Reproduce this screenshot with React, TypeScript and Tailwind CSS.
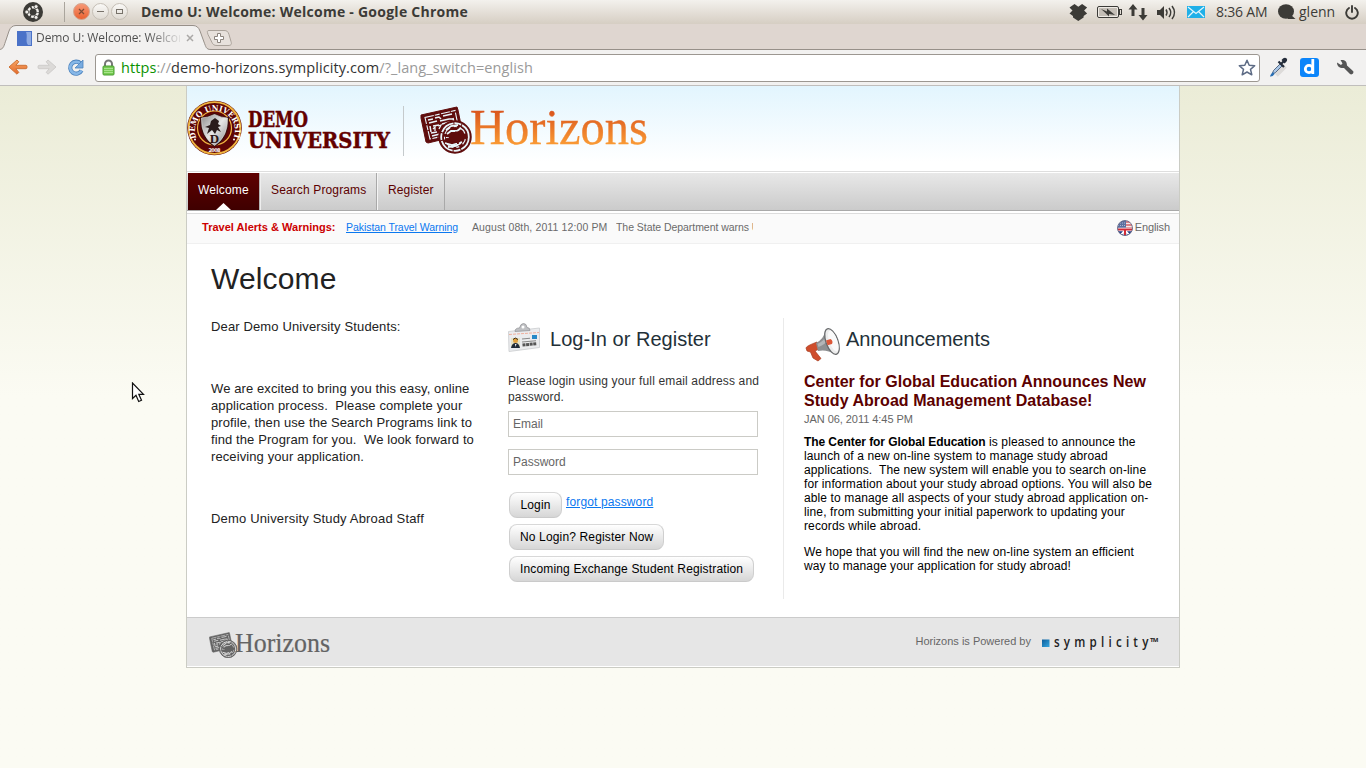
import React from "react";

const UI = "font-['Open_Sans','Noto_Sans',sans-serif]";

function UbuntuLogo() {
  return (
    <svg width="20" height="20" viewBox="0 0 20 20">
      <circle cx="10" cy="10" r="10" fill="#3c3b37" />
      <circle cx="10" cy="10" r="4.8" fill="none" stroke="#f0eeea" strokeWidth="2.4" strokeDasharray="8.6 1.450" strokeDashoffset="-0.7" />
      <g fill="#f0eeea" stroke="#3c3b37" strokeWidth="0.8">
        <circle cx="3.8" cy="10" r="2" />
        <circle cx="13.1" cy="4.6" r="2" />
        <circle cx="13.1" cy="15.4" r="2" />
      </g>
    </svg>
  );
}

function WindowButtons() {
  return (
    <svg width="56" height="18" viewBox="0 0 56 18">
      <defs>
        <linearGradient id="wb" x1="0" y1="0" x2="0" y2="1">
          <stop offset="0" stopColor="#fbfaf8" />
          <stop offset="1" stopColor="#dfdad2" />
        </linearGradient>
        <linearGradient id="wc" x1="0" y1="0" x2="0" y2="1">
          <stop offset="0" stopColor="#f79a78" />
          <stop offset="1" stopColor="#e9602f" />
        </linearGradient>
      </defs>
      <circle cx="9.500" cy="8.500" r="8" fill="url(#wc)" stroke="#d3a48f" />
      <path d="M7 6l5 5M12 6l-5 5" stroke="#7d4a34" strokeWidth="1.200" />
      <circle cx="28.500" cy="8.500" r="8" fill="url(#wb)" stroke="#c4beb5" />
      <path d="M25 8.500h7" stroke="#77726a" />
      <circle cx="47.500" cy="8.500" r="8" fill="url(#wb)" stroke="#c4beb5" />
      <rect x="44.500" y="6.500" width="6" height="4" fill="none" stroke="#77726a" />
    </svg>
  );
}

function TrayIcons() {
  return (
    <svg width="140" height="20" viewBox="1068 2 140 20" fill="#3c3b37">
      <path d="M1069.500 7.500l5-3.500 3.800 2.800 3.800-2.800 5 3.500-3 3 3 3-3.500 2.500v1.500l-5.300 3.500-5.300-3.500v-1.500l-3.500-2.500 3-3z" />
      <rect x="1097.500" y="6.500" width="21" height="11" rx="1.500" fill="#efebe5" stroke="#3c3b37" />
      <rect x="1099" y="8" width="18" height="8" fill="#c4beb6" />
      <rect x="1119.500" y="9.500" width="2" height="5" fill="none" stroke="#3c3b37" />
      <path d="M1101 9l6 2.500 0-3 8 6.500-6-1 0 2.500-4-4z" />
      <path d="M1133 4l-4.500 5.500h3v6.500h3v-6.500h3zM1143 20.500l-4.500-5.500h3v-7h3v7h3z" />
      <path d="M1157 10h3l4-4v13l-4-4h-3z" />
      <path d="M1166 9.500q2 3 0 6M1169 8q3.500 4.500 0 9M1172 6q5 6.500 0 13" fill="none" stroke="#3c3b37" strokeWidth="1.500" />
      <rect x="1187" y="6" width="18" height="12" fill="#20b0e8" />
      <path d="M1188 7l8 6.500 8-6.500M1188 17l5.500-5.500M1204 17l-5.500-5.500" fill="none" stroke="#e4f6fc" strokeWidth="1.200" />
    </svg>
  );
}

function TitleBar() {
  return (
    <div className="flex h-6 items-center bg-linear-to-b from-[#f3f1ed] to-[#d6cec3] text-[#3c3b37]">
      <div className="ml-[23px]"><UbuntuLogo /></div>
      <div className="ml-[21px] h-5 w-px bg-[#aaa59d]" />
      <div className="ml-[7px] flex w-[69px]"><WindowButtons /></div>
      <div className="w-[330px] text-[14px] leading-6 font-bold tracking-[0.250px] whitespace-nowrap">Demo U: Welcome: Welcome - Google Chrome</div>
      <div className="ml-auto"><TrayIcons /></div>
      <div className="ml-2 w-[54px] text-[14px] leading-6 tracking-[-0.200px] whitespace-nowrap">8:36 AM</div>
      <svg className="ml-2" width="18" height="16" viewBox="0 0 18 16" fill="#3c3b37">
        <ellipse cx="8" cy="7.500" rx="8" ry="7.300" />
        <path d="M12 10l5.500 5h-8z" />
      </svg>
      <div className="ml-[3px] w-[38px] text-[14px] leading-6 tracking-[0px] whitespace-nowrap">glenn</div>
      <svg className="mr-[7px] ml-2" width="14" height="15" viewBox="0 0 14 15" fill="none" stroke="#3c3b37" strokeWidth="1.900" strokeLinecap="round">
        <path d="M4 3a5.800 5.800 0 1 0 6 0M7 1v6" />
      </svg>
    </div>
  );
}

function TabStrip() {
  return (
    <div className="relative h-[26px] border-b border-[#979089] bg-[#dfd6d0]">
      <svg className="absolute top-0 left-0" width="240" height="27" viewBox="0 24 240 27">
        <path d="M-1 50.500V49.500C4 49.500 4 45 6 40L9 31q2-5.500 7-5.500H193q5 0 7 5.500l4 11c2 5 2 7.500 7 7.500v1z" fill="#f2f1f0" />
        <path d="M-1 49.500C4 49.500 4 45 6 40L9 31q2-5.500 7-5.500H193q5 0 7 5.500l4 11c2 5 2 7.500 7 7.500" fill="none" stroke="#979089" />
        <path d="M209 30.500h15c3 0 4 1 5 4l2 7c1 3 0 4-3 4h-11c-3 0-4-1-5-3l-4-8c-1-3-1-4 1-4z" fill="#e7e1dc" stroke="#aaa29a" />
        <path d="M217.500 33.500h3v3h3v3h-3v3h-3v-3h-3v-3h3z" fill="#fff" stroke="#8c857e" />
        <rect x="17" y="31" width="15" height="15" fill="#4a72c8" />
        <path d="M26 32h5v13h-3c-3-4 0-8-2-13z" fill="#8fabe2" />
        <path d="M187 35l6 6M193 35l-6 6" stroke="#aaa8a6" strokeWidth="1.500" />
      </svg>
      <div className="absolute top-[5px] left-9 w-[144px] overflow-hidden bg-linear-to-r from-[#4c4c4c] from-[78%] to-[#4c4c4c]/10 bg-clip-text text-[12px] leading-[18px] tracking-[-0.080px] whitespace-nowrap text-transparent">
        Demo U: Welcome: Welcome
      </div>
    </div>
  );
}

function Toolbar() {
  return (
    <div className="flex h-9 items-center border-b border-[#c0bebc] bg-[#f2f1f0]">
      <svg width="95" height="35" viewBox="0 50 95 35">
        <defs>
          <linearGradient id="back" x1="0" y1="0" x2="0" y2="1">
            <stop offset="0" stopColor="#f7a765" />
            <stop offset="1" stopColor="#e5682a" />
          </linearGradient>
        </defs>
        <path d="M9 67l8-7 1.800 1.800-3 3.500H26q1 0 1 1.700T26 68.700H15.800l3 3.700-1.800 1.800z" fill="url(#back)" stroke="#cf7337" strokeLinejoin="round" />
        <path d="M56 67l-8-7-1.800 1.800 3 3.500H39q-1 0-1 1.700t1 1.700h10.200l-3 3.700 1.800 1.800z" fill="#dcdad8" stroke="#cfcdcb" strokeLinejoin="round" />
        <path d="M80.500 63.500a6 6 0 1 0 1 7" fill="none" stroke="#4d83bd" strokeWidth="4.200" />
        <path d="M80.500 63.500a6 6 0 1 0 1 7" fill="none" stroke="#86b7e8" strokeWidth="2.600" />
        <path d="M83 60v8h-8l2.500-2.500z" fill="#78abe0" stroke="#4d83bd" strokeWidth=".8" />
      </svg>
      <div className="flex h-7 w-[1165px] items-center rounded-[3px] border border-[#9c9791] bg-white">
        <svg className="ml-1.5" width="13" height="17" viewBox="0 0 13 17">
          <path d="M3 8V5a3.500 3.500 0 0 1 7 0v3" fill="none" stroke="#777" strokeWidth="2" />
          <rect x="1" y="7" width="11" height="9" rx="1" fill="#76cb52" stroke="#4a9e32" />
          <path d="M2 9.500h9M2 11.500h9M2 13.500h9" stroke="#a7e38b" />
        </svg>
        <div className="ml-[6px] text-[14.500px] leading-6 tracking-[0.080px] whitespace-nowrap text-[#9a9a9a]">
          <span className="text-[#0a9200]">https</span>://<span className="text-[#333]">demo-horizons.symplicity.com</span>/?_lang_switch=english
        </div>
        <svg className="mr-[3px] ml-auto" width="18" height="18" viewBox="0 0 18 18">
          <path d="M9 1.300l2.200 5 5.500.5-4.200 3.600 1.300 5.400L9 13l-4.800 2.800 1.300-5.400L1.300 6.800l5.500-.5z" fill="#fff" stroke="#5d6b85" strokeWidth="1.500" strokeLinejoin="round" />
        </svg>
      </div>
      <svg width="106" height="35" viewBox="1260 50 106 35">
        <path d="M1276 75l9-9" stroke="#c9c7c4" strokeWidth="5" opacity=".5" />
        <path d="M1272 74.500l1.500-4 6.500-6.500 2 2-6.500 6.500z" fill="#a9c6e6" stroke="#485c78" strokeWidth=".9" />
        <path d="M1270 76.500q0-2 3-4.500l1.500 2q-2 3-4.500 2.500z" fill="#2a6fb4" />
        <path d="M1278.500 61.500l5.500 5.500M1281 64l4-4" stroke="#252d3a" strokeWidth="2.200" />
        <path d="M1281.500 60q3-3.500 5-1.500t-2 5z" fill="#252d3a" />
        <rect x="1300" y="58" width="19" height="19" rx="3" fill="#0b85fa" />
        <circle cx="1309" cy="69" r="3.700" fill="none" stroke="#fff" strokeWidth="2.800" />
        <path d="M1312.800 59V74" stroke="#fff" strokeWidth="2.800" />
        <path d="M1337 62.500l4 2.500 1.500-1.500-2-3.500c4-.5 6.500 1 6.500 5.500l6 5.500c1.500 1.500-1 4.500-3 3l-6-6c-4 .5-7-1.500-7-5.500z" fill="#555" />
      </svg>
    </div>
  );
}

function Seal() {
  return (
    <svg width="56" height="56" viewBox="0 0 56 56">
      <defs>
        <path id="sealArc" d="M9.800 39A20 20 0 1 1 46.200 39" />
        <linearGradient id="shield" x1="0" y1="0" x2="1" y2="1">
          <stop offset="0" stopColor="#8d8d8d" />
          <stop offset=".5" stopColor="#e6e6e6" />
          <stop offset="1" stopColor="#888" />
        </linearGradient>
      </defs>
      <circle cx="27.500" cy="28" r="27.300" fill="#5f0505" />
      <circle cx="27.500" cy="28" r="25.800" fill="none" stroke="#efb540" strokeWidth="1.800" />
      <circle cx="27.500" cy="28" r="17" fill="#5f0505" stroke="#efb540" strokeWidth="1.200" />
      <text fontFamily="DejaVu Serif, serif" fontWeight="700" fontSize="7.800" fill="#fff">
        <textPath href="#sealArc" textLength="83" lengthAdjust="spacingAndGlyphs" startOffset="1">DEMO UNIVERSITY</textPath>
      </text>
      <path d="M13 17q7 0 14.500-4 7.500 4 14.500 4 1 21-14.500 30-15.500-9-14.500-30z" fill="#39100e" />
      <path d="M14.500 18q6 0 13-3.500Q34.500 18 40.500 18 41 37 27.500 45.500 14 37 14.500 18z" fill="url(#shield)" stroke="#ddd" strokeWidth=".7" />
      <path d="M24 21l4-3 4 3-1 3 3 2-3 1 3 5-4-2-2 4-3-4-5 4 2-6-4-1 5-2z" fill="#2a1c1c" />
      <text x="27.500" y="42.500" fontFamily="Liberation Serif, serif" fontWeight="700" fontSize="13" fill="#2a1414" textAnchor="middle">D</text>
      <text x="27.500" y="52" fontFamily="DejaVu Sans, sans-serif" fontWeight="700" fontSize="5" fill="#fff" textAnchor="middle" textLength="12">2008</text>
      <circle cx="8" cy="39.500" r="1" fill="#fff" />
      <circle cx="47" cy="39.500" r="1" fill="#fff" />
    </svg>
  );
}

function UniversityName() {
  return (
    <svg width="148" height="48" viewBox="246 106 148 48" fontFamily="DejaVu Serif, serif" fontWeight="700" fill="#630000" stroke="#630000" strokeWidth=".5">
      <text x="248" y="127.300" fontSize="22.500" textLength="60" lengthAdjust="spacingAndGlyphs">DEMO</text>
      <text x="248" y="147.800" fontSize="23" textLength="142" lengthAdjust="spacingAndGlyphs">UNIVERSITY</text>
    </svg>
  );
}

function Stamp({ size, color, paper }: { size: number; color: string; paper: string }) {
  return (
    <svg width={size} height={(size * 48) / 53} viewBox="0 0 53 48" fill="none" stroke={color}>
      <path d="M1 9L37 1l1 3 4 20-1 5-33 8-2-1L1 12z" fill={color} strokeWidth="1" />
      <path d="M5 11.500L35 4.500l4.500 22L10 33z" stroke={paper} strokeWidth="1.100" strokeDasharray="9 1 5 1.500" />
      <path d="M8 14l5-1M15 12l4-1 2 2M23 10l9-2M9 17l8-2M20 15l9-2 4 0M11 27l6-1M10 20l1 6M13 20l6-1M22 18l8-2M12 30l8-2M21 25l3-1M33 12l2 10M30 17l3 2" stroke={paper} strokeWidth="1.500" />
      <path d="M13 23l2-2 0 4M18 20l3-1-2 4M25 21l3-1" stroke={paper} strokeWidth="1.300" />
      <circle cx="35" cy="31" r="16" fill={color} strokeWidth="1.500" />
      <circle cx="35" cy="31" r="13.800" stroke={paper} strokeWidth="1.800" strokeDasharray="15 1 7 1" />
      <circle cx="35" cy="31" r="10.500" stroke={paper} strokeWidth="1.200" strokeDasharray="8 4 3 3" />
      <path d="M26 24l5-4 7-1M27 28l4-3 6 0 4-3M25 37l7 2 10-3M28 41l8-1 5-3M26 32l3 0" stroke={paper} strokeWidth="1.800" />
      <path d="M25 33l8-2 2-5 4 0 0 4 7-1 1 3-7 2-2 4-3-3-8 1z" fill={color} strokeWidth="1" />
    </svg>
  );
}

function HorizonsLogo() {
  return (
    <div className="flex">
      <Stamp size={53} color="#5f0d0d" paper="#e9f6fb" />
      <svg className="-ml-[3px]" width="182" height="46" viewBox="469 106 182 46">
        <defs>
          <linearGradient id="hz" gradientUnits="userSpaceOnUse" x1="0" y1="110" x2="0" y2="146">
            <stop offset="0" stopColor="#d9531c" />
            <stop offset="1" stopColor="#fb9d35" />
          </linearGradient>
        </defs>
        <text x="469" y="144" fontFamily="Liberation Serif, serif" fontSize="50" fill="url(#hz)" stroke="url(#hz)" strokeWidth=".3" textLength="178" lengthAdjust="spacingAndGlyphs">Horizons</text>
      </svg>
    </div>
  );
}

function Header() {
  return (
    <div className="flex h-[86px] items-start border-b border-[#dedede] bg-linear-to-b from-[#e2f5fe] to-white to-90%">
      <div className="mt-[14px]"><Seal /></div>
      <div className="mt-5 ml-[3px]"><UniversityName /></div>
      <div className="mt-5 ml-[9px] h-[50px] w-px bg-[#c5cacc]" />
      <div className="mt-5 ml-4"><HorizonsLogo /></div>
    </div>
  );
}

function Nav() {
  return (
    <div className="mt-px flex h-[38px] border-b border-[#a9a9a9] bg-linear-to-b from-[#e8e8e8] to-[#cbcbcb] pl-px text-[12px] leading-[34px] tracking-[0.130px] text-[#5c0000]">
      <div className="relative w-[72px] border-r border-[#b4b4b4] bg-linear-to-b from-[#5f0000] to-[#3f0000] pl-2.5 text-white">
        Welcome
        <svg className="absolute bottom-0 left-7" width="15" height="7" viewBox="0 0 15 7"><path d="M0 7L7.500 0 15 7z" fill="#fff" /></svg>
      </div>
      <div className="w-[117px] border-r border-l border-r-[#a9a9a9] border-l-[#eee] pl-2.5">Search Programs</div>
      <div className="w-[68px] border-r border-l border-r-[#a9a9a9] border-l-[#f4f4f4] pl-2.5">Register</div>
    </div>
  );
}

function FlagIcon() {
  return (
    <svg width="16" height="16" viewBox="0 0 16 16">
      <defs><clipPath id="fl"><circle cx="8" cy="8" r="7.500" /></clipPath></defs>
      <g clipPath="url(#fl)">
        <rect width="16" height="16" fill="#f5e9ea" />
        <path d="M8 2h8M8 5h8M8 8h8" stroke="#cf6067" strokeWidth="1.400" />
        <rect width="9" height="8.500" fill="#5a6f9f" />
        <path d="M1 3h7M1 5.500h7" stroke="#aab6d2" strokeDasharray="1 1" />
        <rect y="8.500" width="16" height="8" fill="#223d85" />
        <path d="M3 16L8 10M13 16l-5-6" stroke="#fff" strokeWidth="1.800" />
        <path d="M8 8.500v8M0 9.500h16" stroke="#fff" strokeWidth="3.500" />
        <path d="M8 8.500v8M0 9.500h16" stroke="#d22b38" strokeWidth="2" />
      </g>
      <circle cx="8" cy="8" r="7.500" fill="none" stroke="#596080" strokeWidth=".8" />
    </svg>
  );
}

function Alerts() {
  return (
    <div className="mt-0.5 flex h-[31px] items-center border-t border-b border-t-[#dcdcdc] border-b-[#f0f0f0] bg-[#fafafa] pb-[3px] text-[10px] whitespace-nowrap text-[#6a6a6a]">
      <b className="ml-[15px] w-[144px] text-[11px] tracking-[0.020px] text-[#c00]">Travel Alerts &amp; Warnings:</b>
      <a className="mt-px w-[126px] text-[10.500px] tracking-[-0.060px] text-[#0a78f0] underline">Pakistan Travel Warning</a>
      <span className="mt-px w-[144px] text-[10.500px] tracking-[0.120px]">August 08th, 2011 12:00 PM</span>
      <span className="mt-px w-[137px] overflow-hidden text-[10.500px] tracking-[-0.050px]">The State Department warns U.S.</span>
      <span className="mt-0.5 ml-auto"><FlagIcon /></span>
      <span className="mr-[9px] ml-0.5 text-[11px] tracking-[-0.120px]">English</span>
    </div>
  );
}

function WelcomeColumn() {
  return (
    <div className="w-[297px] text-[13px] leading-[17px] tracking-[0.100px] whitespace-pre text-[#222]">
      <p className="tracking-[0.130px]">Dear Demo University Students:</p>
      <p className="mt-[45px]">{"We are excited to bring you this easy, online\napplication process.  Please complete your\nprofile, then use the Search Programs link to\nfind the Program for you.  We look forward to\nreceiving your application."}</p>
      <p className="mt-[45px] tracking-[0.170px]">Demo University Study Abroad Staff</p>
    </div>
  );
}

function BadgeIcon() {
  return (
    <svg width="34" height="30" viewBox="0 0 34 30">
      <path d="M1.500 8.500l31-3.500 0 19.500-30.500 4z" fill="#ebecee" stroke="#c9cbce" strokeWidth=".8" />
      <path d="M2 11.500l30-2" stroke="#f0a088" strokeDasharray="3 1" opacity=".8" />
      <path d="M8 8.500q0-3.500 4.500-3.500 1-4.500 4-4.500t3.500 4q3 0 3 3z" fill="#bfc0c3" stroke="#95979b" strokeWidth=".8" />
      <circle cx="16" cy="4" r="1.500" fill="#fff" />
      <rect x="4" y="15" width="9" height="10" fill="#e8e3c4" />
      <path d="M4 25q1-5 4.500-5t4.500 5z" fill="#222c38" />
      <circle cx="8.500" cy="17.500" r="2.500" fill="#e3a23f" />
      <path d="M6 16.500q2-3 5 0" stroke="#3a2b18" fill="none" />
      <path d="M8 21l.5 3 1-3z" fill="#fff" />
      <rect x="25" y="12" width="5" height="4" fill="#2689c7" />
      <path d="M15 16l8-.7M15 19l14-1.300" stroke="#888" strokeWidth="1.100" />
      <path d="M15.500 22l14-1.300" stroke="#555" strokeWidth="3" strokeDasharray="3 .6" />
    </svg>
  );
}

function Field({ label }: { label: string }) {
  return <input className="block h-[26px] w-[250px] border border-[#cbcbc6] bg-white px-1 pb-px text-[12px] placeholder:text-[#666]" placeholder={label} />;
}

function PillButton({ label }: { label: string }) {
  return <button className="block h-[26px] rounded-[8px] border border-t-[#d8d8d8] border-r-[#cfcfcf] border-b-[#cacaca] border-l-[#cfcfcf] bg-linear-to-b from-white to-[#d6d6d6] px-2.5 text-[12px] leading-[24px] tracking-[0.150px] whitespace-nowrap text-black">{label}</button>;
}

function LoginColumn() {
  return (
    <div className="w-[276px] border-r border-[#eaeaea] text-[12px] text-[#333]">
      <div className="flex h-[55px]">
        <div className="mt-[5px] -ml-px"><BadgeIcon /></div>
        <h2 className="mt-[7px] ml-[9px] text-[20px] leading-7 tracking-[0.030px] whitespace-nowrap text-[#233038]">Log-In or Register</h2>
      </div>
      <p className="leading-4 tracking-[0.150px] whitespace-pre">{"Please login using your full email address and\npassword."}</p>
      <div className="mt-[6px] flex flex-col gap-3">
        <Field label="Email" />
        <Field label="Password" />
      </div>
      <div className="mt-[17px] ml-px flex flex-col items-start gap-1.5">
        <div className="flex gap-1">
          <div className="w-[53px] *:w-full"><PillButton label="Login" /></div>
          <a className="leading-5 tracking-[0.130px] text-[#0a78f0] underline">forgot password</a>
        </div>
        <PillButton label="No Login? Register Now" />
        <PillButton label="Incoming Exchange Student Registration" />
      </div>
    </div>
  );
}

function Megaphone() {
  return (
    <svg width="36" height="35" viewBox="0 0 36 35">
      <path d="M1 21q0-2 11-6l2 7-4 2 6 7.500-3 2.500-5-3-2.500-6-3.500-1z" fill="#cf4d2c" stroke="#a63c20" strokeWidth=".7" />
      <path d="M11 16Q19 12 21 2l9 25q-9-5-17-3z" fill="#8d8f91" />
      <path d="M12.500 17q7-3 10-11l2 6q-4 5-11 8z" fill="#b3b5b7" />
      <ellipse cx="27" cy="14.500" rx="6" ry="13.500" transform="rotate(-20 27 14.500)" fill="#ececec" stroke="#686a6c" strokeWidth="1.300" />
      <ellipse cx="28.300" cy="14" rx="4" ry="11" transform="rotate(-20 28.300 14)" fill="#fafafa" />
      <path d="M21 13.500l4.500-1.500q3 2 1.500 5l-4.500 1.200z" fill="#dc5738" />
    </svg>
  );
}

function Announcements() {
  return (
    <div className="ml-5 text-[12px] leading-[14px] tracking-[0.120px] whitespace-pre text-black">
      <div className="flex h-[54px]">
        <div className="mt-[9px] ml-px"><Megaphone /></div>
        <h2 className="mt-[7px] ml-[5px] text-[20px] leading-7 tracking-[-0.050px] text-[#233038]">Announcements</h2>
      </div>
      <h3 className="text-[16px] leading-[19px] font-bold tracking-[0.030px] text-[#5c0000]">{"Center for Global Education Announces New\nStudy Abroad Management Database!"}</h3>
      <div className="mt-[2px] text-[11px] leading-[14px] tracking-[-0.050px] text-[#666]">JAN 06, 2011 4:45 PM</div>
      <p className="mt-[9px]"><b className="tracking-[-0.080px]">The Center for Global Education</b>{" is pleased to announce the\nlaunch of a new on-line system to manage study abroad\napplications.  The new system will enable you to search on-line\nfor information about your study abroad options. You will also be\nable to manage all aspects of your study abroad application on-\nline, from submitting your initial paperwork to updating your\nrecords while abroad."}</p>
      <p className="mt-3 tracking-[0.100px]">{"We hope that you will find the new on-line system an efficient\nway to manage your application for study abroad!"}</p>
    </div>
  );
}

function Footer() {
  return (
    <div className="flex h-[50px] border-t border-b border-t-[#cbcbcb] border-b-white bg-[#e6e6e6]">
      <div className="mt-[14px] ml-[22px]"><Stamp size={29} color="#636363" paper="#dcdcdc" /></div>
      <svg className="mt-3 -ml-[3px]" width="97" height="28" viewBox="0 0 97 28">
        <text x="0" y="21.800" fontFamily="Liberation Serif, serif" fontSize="26.500" fill="#636363" stroke="#636363" strokeWidth=".2" textLength="95" lengthAdjust="spacingAndGlyphs">Horizons</text>
      </svg>
      <div className="mt-4 mr-[11px] ml-auto text-[11px] leading-[14px] text-[#666]">Horizons is Powered by</div>
      <svg className="mt-4 mr-5" width="117" height="20" viewBox="0 0 117 20">
        <defs><linearGradient id="sq" x1="0" y1="0" x2="1" y2="1"><stop offset="0" stopColor="#0d5d9b" /><stop offset="1" stopColor="#35a7e0" /></linearGradient></defs>
        <rect y="5.500" width="7.500" height="7.500" fill="url(#sq)" />
        <text transform="translate(12 13) scale(.8 1)" fontFamily="Open Sans, sans-serif" fontWeight="600" fontSize="14.500" fill="#222" textLength="118">symplicity</text>
        <text x="108" y="8" fontFamily="Open Sans, sans-serif" fontWeight="700" fontSize="6" fill="#222" textLength="8.500">TM</text>
      </svg>
    </div>
  );
}

export default function App() {
  return (
    <div className={"relative flex h-[768px] w-[1366px] flex-col overflow-hidden " + UI}>
      <TitleBar />
      <TabStrip />
      <Toolbar />
      <div className="flex-1 bg-linear-to-b from-[#ebecd7] to-[#fbfbf3] to-[310px] font-['Liberation_Sans',Arial,sans-serif]">
        <div className="mx-auto flex h-[582px] w-[994px] flex-col border-r border-b border-l border-[#cbccc4] bg-white">
          <Header />
          <Nav />
          <Alerts />
          <div className="flex-1">
            <h1 className="mt-[17px] ml-6 text-[30px] leading-9 tracking-[0.150px] text-[#222]">Welcome</h1>
            <div className="mt-[21px] ml-6 flex h-[281px] items-stretch">
              <WelcomeColumn />
              <LoginColumn />
              <Announcements />
            </div>
          </div>
          <Footer />
        </div>
      </div>
      <svg className="absolute top-[382px] left-[131px]" width="14" height="22" viewBox="0 0 14 22">
        <path d="M1.500 1v15.500l3.500-3.300 2.700 6.300 2.800-1.200-2.700-6h4.700z" fill="#fff" stroke="#111" strokeWidth="1.200" />
      </svg>
    </div>
  );
}
